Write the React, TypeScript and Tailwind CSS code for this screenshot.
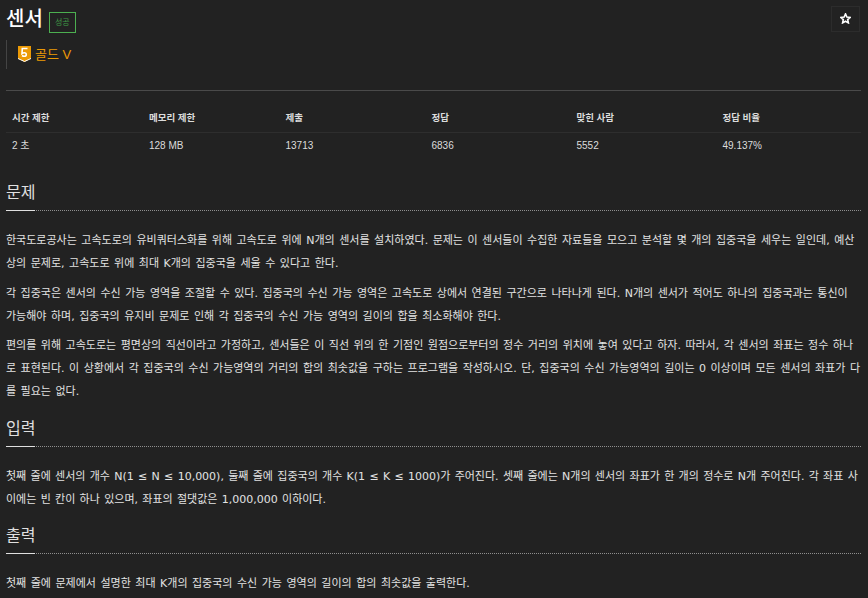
const stats = [
  ['시간 제한', '2 초'],
  ['메모리 제한', '128 MB'],
  ['제출', '13713'],
  ['정답', '6836'],
  ['맞힌 사람', '5552'],
  ['정답 비율', '49.137%'],
];

function Heading({ children }: { children: string }) {
  return (
    <div className="border-b border-dotted border-[#8f8f8f] h-[37px] flex">
      <h2 className="text-[16px] leading-[25px] pt-[6px] text-[#e0e0e0] border-b border-[#e0e0e0] h-[37px] w-[29px] shrink-0 font-normal whitespace-nowrap">
        {children}
      </h2>
    </div>
  );
}

function Para({ children, tight }: { children: string; tight?: boolean }) {
  return (
    <p
      className={
        tight
          ? "font-['DejaVu_Sans','Noto_Sans_CJK_KR',sans-serif] text-[11px] leading-[23px] text-[#e3e3e3] mb-[6.5px] break-all [word-spacing:0.8px]"
          : "font-['DejaVu_Sans','Noto_Sans_CJK_KR',sans-serif] text-[11px] leading-[23px] text-[#e3e3e3] mb-[6.5px] break-all [word-spacing:1px]"
      }
    >
      {children}
    </p>
  );
}

export default function App() {
  return (
    <div className="w-[868px] h-[598px] overflow-hidden bg-[#222222] pl-[6px] pr-[7px] font-['Liberation_Sans','Noto_Sans_CJK_KR',sans-serif]">
      <div className="flex items-start justify-between h-[91px] border-b border-[#4a4a4a]">
        <div>
          <div className="flex items-center h-[40px]">
            <h1 className="text-[20px] font-medium text-white leading-[30px] mt-[-2px]">센서</h1>
            <span className="ml-[6px] mt-[5px] w-[27px] h-[21px] border border-[#4caf50] text-[8px] text-[#3f9a46] flex items-center justify-center">
              성공
            </span>
          </div>
          <div className="border-l border-[#444444] h-[29px] flex items-center pl-[11px]">
            <svg width="14" height="17" viewBox="0 0 14 17">
              <path d="M0 0h13v12.5L6.5 16 0 12.5z" fill="#ec9a05" />
              <path d="M0 12.5 6.5 15.500 13 12.500" fill="none" stroke="#fff" strokeWidth="1" />
              <path d="M9.500 2.500H4.300L4 7.500c.8-.6 1.500-.8 2.300-.8 1.200 0 2 .8 2 1.800S7.500 10.300 6.200 10.300c-.8 0-1.500-.3-2.200-.8" fill="none" stroke="#fff" strokeWidth="1.600" />
            </svg>
            <span className="ml-[3px] text-[13px] text-[#ec9a05]">골드 V</span>
          </div>
        </div>
        <button className="w-[29px] h-[26px] mt-[6px] mr-[1px] border border-[#2c2c2c] flex items-center justify-center">
          <svg width="11" height="11" viewBox="0 0 24 24" fill="none" stroke="#fff" strokeWidth="3.500" className="mt-[-2px]">
            <path d="M12 2l3 6.700 7.200.8-5.400 4.900 1.500 7.100L12 17.900l-6.300 3.600 1.500-7.100L1.800 9.500 9 8.700z" />
          </svg>
        </button>
      </div>

      <div className="grid grid-cols-[137px_136.500px_146px_145px_146px_1fr] mt-[13px] text-[#dcdcdc] text-[10px]">
        {stats.map(([label]) => (
          <div key={label} className="h-[29px] pl-[6px] flex items-center font-bold text-[9.500px] border-b border-[#2e2e2e]">
            {label}
          </div>
        ))}
        {stats.map(([, value]) => (
          <div key={value} className="h-[24px] pl-[6px] flex items-center">
            {value}
          </div>
        ))}
      </div>

      <div className="mt-[17px]">
        <Heading>문제</Heading>
      </div>
      <div className="mt-[18px]">
        <Para>한국도로공사는 고속도로의 유비쿼터스화를 위해 고속도로 위에 N개의 센서를 설치하였다. 문제는 이 센서들이 수집한 자료들을 모으고 분석할 몇 개의 집중국을 세우는 일인데, 예산상의 문제로, 고속도로 위에 최대 K개의 집중국을 세울 수 있다고 한다.</Para>
        <Para>각 집중국은 센서의 수신 가능 영역을 조절할 수 있다. 집중국의 수신 가능 영역은 고속도로 상에서 연결된 구간으로 나타나게 된다. N개의 센서가 적어도 하나의 집중국과는 통신이 가능해야 하며, 집중국의 유지비 문제로 인해 각 집중국의 수신 가능 영역의 길이의 합을 최소화해야 한다.</Para>
        <Para>편의를 위해 고속도로는 평면상의 직선이라고 가정하고, 센서들은 이 직선 위의 한 기점인 원점으로부터의 정수 거리의 위치에 놓여 있다고 하자. 따라서, 각 센서의 좌표는 정수 하나로 표현된다. 이 상황에서 각 집중국의 수신 가능영역의 거리의 합의 최솟값을 구하는 프로그램을 작성하시오. 단, 집중국의 수신 가능영역의 길이는 0 이상이며 모든 센서의 좌표가 다를 필요는 없다.</Para>
      </div>
      <Heading>입력</Heading>
      <div className="mt-[18px]">
        <Para tight>첫째 줄에 센서의 개수 N(1 ≤ N ≤ 10,000), 둘째 줄에 집중국의 개수 K(1 ≤ K ≤ 1000)가 주어진다. 셋째 줄에는 N개의 센서의 좌표가 한 개의 정수로 N개 주어진다. 각 좌표 사이에는 빈 칸이 하나 있으며, 좌표의 절댓값은 1,000,000 이하이다.</Para>
      </div>
      <Heading>출력</Heading>
      <div className="mt-[18px]">
        <Para>첫째 줄에 문제에서 설명한 최대 K개의 집중국의 수신 가능 영역의 길이의 합의 최솟값을 출력한다.</Para>
      </div>
    </div>
  );
}
